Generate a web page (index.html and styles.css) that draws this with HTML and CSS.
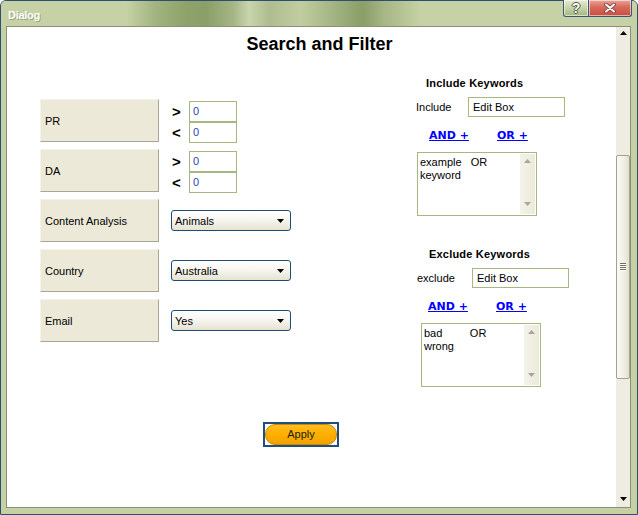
FILE: index.html
```html
<!DOCTYPE html>
<html>
<head>
<meta charset="utf-8">
<title>Dialog</title>
<link rel="stylesheet" href="styles.css">
</head>
<body>
<div class="window">
  <div class="titlebar">
    <span class="title">Dialog</span>
    <div class="controls">
      <div class="ctl help"><span class="qmark">?</span></div>
      <div class="ctl close">
        <svg width="12" height="10" viewBox="0 0 12 10">
          <path d="M2 1.5 L10 8.5 M10 1.5 L2 8.5" stroke="#6a3b34" stroke-width="3.6" stroke-linecap="round" fill="none"/>
          <path d="M2 1.5 L10 8.5 M10 1.5 L2 8.5" stroke="#ffffff" stroke-width="2" stroke-linecap="round" fill="none"/>
        </svg>
      </div>
    </div>
  </div>
  <div class="client">
    <div class="content">
      <h1 class="heading">Search and Filter</h1>
      <div class="main">
        <div class="filters">
          <div class="frow">
            <div class="flabel">PR</div>
            <div class="range">
              <div class="rline"><span class="op">&gt;</span><div class="num">0</div></div>
              <div class="rline"><span class="op">&lt;</span><div class="num">0</div></div>
            </div>
          </div>
          <div class="frow">
            <div class="flabel">DA</div>
            <div class="range">
              <div class="rline"><span class="op">&gt;</span><div class="num">0</div></div>
              <div class="rline"><span class="op">&lt;</span><div class="num">0</div></div>
            </div>
          </div>
          <div class="frow">
            <div class="flabel">Content Analysis</div>
            <div class="combo"><span>Animals</span><svg class="arrow" width="7" height="4" viewBox="0 0 7 4"><polygon points="0,0 7,0 3.5,4" fill="#000"/></svg></div>
          </div>
          <div class="frow">
            <div class="flabel">Country</div>
            <div class="combo"><span>Australia</span><svg class="arrow" width="7" height="4" viewBox="0 0 7 4"><polygon points="0,0 7,0 3.5,4" fill="#000"/></svg></div>
          </div>
          <div class="frow">
            <div class="flabel">Email</div>
            <div class="combo"><span>Yes</span><svg class="arrow" width="7" height="4" viewBox="0 0 7 4"><polygon points="0,0 7,0 3.5,4" fill="#000"/></svg></div>
          </div>
        </div>
        <div class="keywords">
          <div class="kw-title inc">Include Keywords</div>
          <div class="kw-row inc">
            <span class="kw-label">Include</span>
            <div class="edit">Edit Box</div>
          </div>
          <div class="kw-links inc">
            <span class="link-slot"><a class="link">AND +</a></span>
            <a class="link">OR +</a>
          </div>
          <div class="listbox inc">
            <div class="lb-text">example   OR
keyword</div>
            <div class="lb-scroll">
              <svg width="7" height="4" viewBox="0 0 7 4"><polygon points="0,4 7,4 3.5,0" fill="#a6a69c"/></svg>
              <svg width="7" height="4" viewBox="0 0 7 4"><polygon points="0,0 7,0 3.5,4" fill="#a6a69c"/></svg>
            </div>
          </div>

          <div class="kw-title exc">Exclude Keywords</div>
          <div class="kw-row exc">
            <span class="kw-label">exclude</span>
            <div class="edit">Edit Box</div>
          </div>
          <div class="kw-links exc">
            <span class="link-slot"><a class="link">AND +</a></span>
            <a class="link">OR +</a>
          </div>
          <div class="listbox exc">
            <div class="lb-text">bad         OR
wrong</div>
            <div class="lb-scroll">
              <svg width="7" height="4" viewBox="0 0 7 4"><polygon points="0,4 7,4 3.5,0" fill="#a6a69c"/></svg>
              <svg width="7" height="4" viewBox="0 0 7 4"><polygon points="0,0 7,0 3.5,4" fill="#a6a69c"/></svg>
            </div>
          </div>
        </div>
      </div>
      <div class="actions">
        <div class="apply"><div class="apply-pill">Apply</div></div>
      </div>
    </div>
    <div class="vscroll">
      <div class="sb-btn up"><svg width="7" height="4" viewBox="0 0 7 4"><polygon points="0,4 7,4 3.5,0" fill="#000"/></svg></div>
      <div class="sb-track">
        <div class="sb-thumb"><span class="grip"></span></div>
      </div>
      <div class="sb-btn down"><svg width="7" height="4" viewBox="0 0 7 4"><polygon points="0,0 7,0 3.5,4" fill="#000"/></svg></div>
    </div>
  </div>
</div>
</body>
</html>
```
FILE: styles.css
```css
html, body {
  margin: 0;
  padding: 0;
  background: #ffffff;
}

body {
  font-family: "Liberation Sans", Arial, sans-serif;
  font-size: 11px;
  color: #000;
}

.window {
  width: 638px;
  height: 515px;
  box-sizing: border-box;
  border: 1px solid #2c4f73;
  border-radius: 6px 6px 0 0;
  background: #c5d1a3;
  display: flex;
  flex-direction: column;
}

/* ---------- title bar ---------- */
.titlebar {
  height: 25px;
  flex: none;
  display: flex;
  align-items: flex-start;
  padding-right: 5px;
  border-radius: 5px 5px 0 0;
  background: linear-gradient(90deg,
    #c6d2a5 0px, #c6d2a5 125px,
    #a1b37f 155px, #8ea26a 185px, #8b9f68 205px,
    #a5b586 232px, #c9d5ac 248px, #aebd8f 268px,
    #c1cda0 300px, #a1b280 335px, #8a9e67 362px,
    #a5b584 382px, #c6d2a5 420px, #c6d2a5 100%);
}

.title {
  margin-top: 7px;
  margin-left: 7px;
  line-height: 14px;
  font-weight: 700;
  font-size: 11px;
  letter-spacing: -0.3px;
  color: #ffffff;
  text-shadow: 1px 1px 0 rgba(90, 105, 70, 0.45);
}

.controls {
  margin-left: auto;
  margin-top: -1px;
  display: flex;
}

.ctl {
  height: 17px;
  box-sizing: border-box;
  border: 1px solid #3a5874;
  border-top: none;
  display: flex;
  align-items: center;
  justify-content: center;
  box-shadow: inset 0 0 0 1px rgba(255, 255, 255, 0.55);
}

.help {
  width: 26px;
  border-radius: 0 0 0 3px;
  background: linear-gradient(#e6ecd6, #c6d4a6 50%, #a4b77f);
}

.qmark {
  font-family: "Liberation Sans", Arial, sans-serif;
  font-weight: bold;
  font-size: 14px;
  line-height: 14px;
  color: #ffffff;
  text-shadow: 1px 0 0 #4f5a45, -1px 0 0 #4f5a45, 0 1px 0 #4f5a45, 0 -1px 0 #4f5a45;
}

.close {
  width: 43px;
  border-left: none;
  border-radius: 0 0 3px 0;
  background: linear-gradient(#eaa598, #d8695c 45%, #c94c3f);
}

/* ---------- client ---------- */
.client {
  flex: 1;
  min-height: 0;
  margin: 0 6px 6px 5px;
  border: 1px solid #8b8d7f;
  display: flex;
  background: #ffffff;
}

.content {
  width: 609px;
  flex: none;
  background: #ffffff;
}

.heading {
  margin: 0;
  padding: 7px 0 0 16px;
  line-height: 20px;
  font-size: 18px;
  font-weight: bold;
  text-align: center;
  font-family: "Liberation Sans", Arial, sans-serif;
}

.main {
  display: flex;
  align-items: flex-start;
}

/* ---------- left filters ---------- */
.filters {
  width: 300px;
  box-sizing: border-box;
  padding: 45px 0 0 33px;
  display: flex;
  flex-direction: column;
  gap: 7px;
}

.frow {
  height: 43px;
  display: flex;
  align-items: flex-start;
}

.flabel {
  width: 119px;
  height: 43px;
  box-sizing: border-box;
  flex: none;
  background: #ece9d8;
  border-top: 1px solid #f4f2ea;
  border-left: 1px solid #f4f2ea;
  border-right: 1px solid #a8a696;
  border-bottom: 1px solid #a8a696;
  padding-left: 4px;
  display: flex;
  align-items: center;
}

.range {
  margin-top: 2px;
  margin-left: 13px;
  display: flex;
  flex-direction: column;
}

.rline {
  height: 21px;
  display: flex;
  align-items: center;
}

.op {
  width: 17px;
  font-weight: bold;
  font-size: 15px;
  line-height: 15px;
}

.num {
  width: 48px;
  height: 21px;
  box-sizing: border-box;
  border: 1px solid #a4b880;
  padding-left: 3px;
  line-height: 19px;
  color: #1d47b4;
}

.combo {
  margin-left: 12px;
  align-self: center;
  width: 120px;
  height: 21px;
  box-sizing: border-box;
  border: 1px solid #1f4b78;
  border-radius: 3px;
  background: linear-gradient(#ffffff 0%, #f7f6f0 45%, #e6e3d2 100%);
  padding: 0 6px 0 3px;
  display: flex;
  align-items: center;
  justify-content: space-between;
}

.combo .arrow {
  display: block;
}

/* ---------- right keywords ---------- */
.keywords {
  margin-left: 109px;
  display: flex;
  flex-direction: column;
  align-items: flex-start;
}

.kw-title {
  font-weight: bold;
  font-size: 11px;
  letter-spacing: 0.2px;
  line-height: 14px;
}

.kw-title.inc { margin-top: 22px; padding-left: 10px; }
.kw-title.exc { margin-top: 31px; padding-left: 13px; }

.kw-row {
  margin-top: 7px;
  height: 20px;
  display: flex;
  align-items: center;
}

.kw-row.exc { padding-left: 1px; }
.kw-row.inc .kw-label { width: 52px; }
.kw-row.exc .kw-label { width: 55px; }

.edit {
  width: 97px;
  height: 20px;
  box-sizing: border-box;
  border: 1px solid #a4b880;
  padding-left: 4px;
  line-height: 18px;
}

.kw-links {
  margin-top: 11px;
  height: 16px;
  display: flex;
  align-items: center;
}

.kw-links.inc { padding-left: 13px; }
.kw-links.exc { padding-left: 12px; }

.link-slot {
  width: 68px;
}

.link {
  font-family: "DejaVu Sans", "Liberation Sans", sans-serif;
  font-weight: bold;
  font-size: 11px;
  line-height: 16px;
  color: #0000ff;
  text-decoration: underline;
}

.listbox {
  margin-top: 8px;
  width: 120px;
  height: 64px;
  box-sizing: border-box;
  border: 1px solid #a4b880;
  padding: 1px;
  display: flex;
}

.listbox.inc { margin-left: 1px; }
.listbox.exc { margin-left: 5px; }

.lb-text {
  flex: 1;
  padding: 2px 0 0 1px;
  white-space: pre;
  line-height: 13px;
}

.lb-scroll {
  width: 15px;
  flex: none;
  background: linear-gradient(90deg, #f4f3ea, #ecead9);
  display: flex;
  flex-direction: column;
  align-items: center;
  justify-content: space-between;
  padding: 5px 0 8px;
  box-sizing: border-box;
}

.lb-scroll svg { display: block; }

/* ---------- apply ---------- */
.actions {
  margin-top: 35px;
  padding-left: 256px;
}

.apply {
  width: 76px;
  height: 25px;
  box-sizing: border-box;
  border: 2px solid #1f4f7e;
}

.apply-pill {
  height: 21px;
  box-sizing: border-box;
  border: 1px solid #c98900;
  border-radius: 10px;
  background: linear-gradient(#ffbd22, #ffb000 45%, #f2a200);
  text-align: center;
  line-height: 19px;
  font-size: 11px;
  color: #1a1d00;
}

/* ---------- window scrollbar ---------- */
.vscroll {
  width: 14px;
  flex: none;
  background: #efede2;
  display: flex;
  flex-direction: column;
}

.sb-btn {
  display: flex;
  align-items: center;
  justify-content: center;
  flex: none;
}

.sb-btn.up { height: 12px; }
.sb-btn.down { height: 16px; }
.sb-btn svg { display: block; }

.sb-track {
  flex: 1;
}

.sb-thumb {
  margin-top: 116px;
  height: 224px;
  box-sizing: border-box;
  border: 1px solid #a3a190;
  border-radius: 2px;
  background: linear-gradient(90deg, #fbfbf4, #f1f0e6 55%, #e2dfcd);
  display: flex;
  align-items: center;
  justify-content: center;
}

.grip {
  width: 6px;
  height: 8px;
  background: repeating-linear-gradient(#6f6e64 0px, #6f6e64 1px, #ffffff 1px, #ffffff 2px);
}
```
